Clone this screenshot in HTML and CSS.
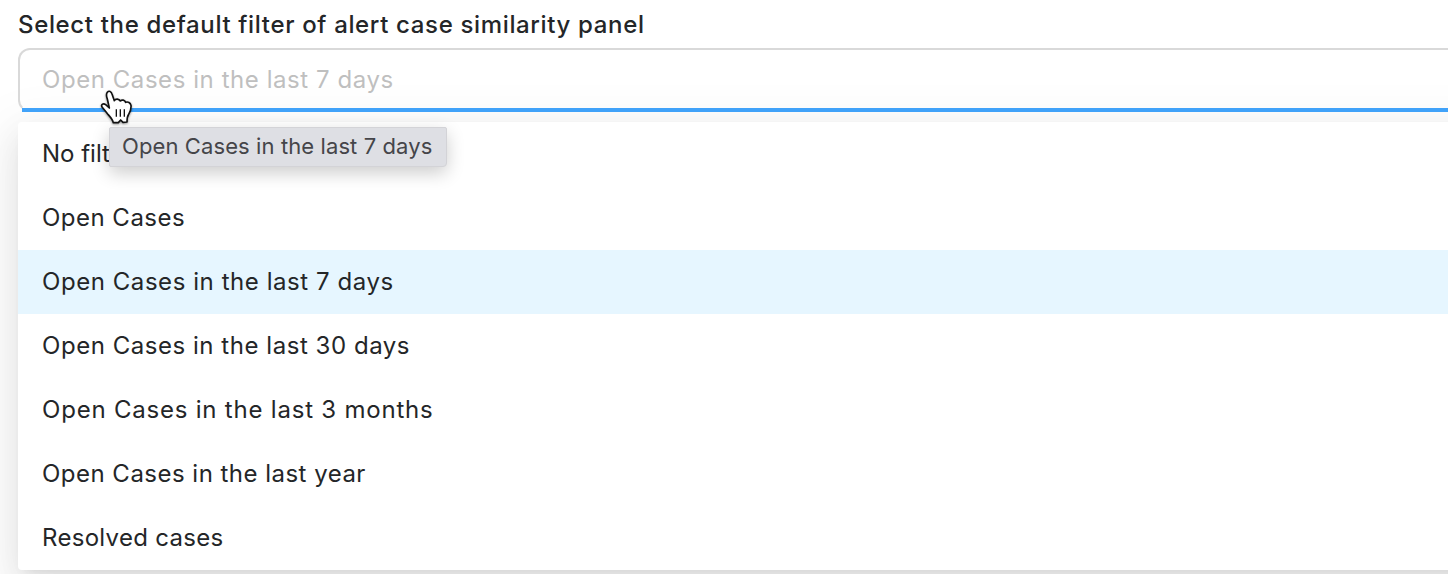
FILE: index.html
```html
<!DOCTYPE html>
<html lang="en">
<head>
<meta charset="utf-8">
<title>Default filter</title>
<link rel="stylesheet" href="styles.css">
</head>
<body>
<main class="field">
  <label class="label">Select the default filter of alert case similarity panel</label>
  <div class="select"><span class="t7">Open Cases in the last 7 days</span></div>
  <div class="menu">
    <div class="option"><span class="none">No filter</span></div>
    <div class="option"><span class="open">Open Cases</span></div>
    <div class="option selected"><span class="t7">Open Cases in the last 7 days</span></div>
    <div class="option"><span class="t30">Open Cases in the last 30 days</span></div>
    <div class="option"><span class="t3">Open Cases in the last 3 months</span></div>
    <div class="option"><span class="year">Open Cases in the last year</span></div>
    <div class="option"><span class="resolved">Resolved cases</span></div>
  </div>
</main>
<div class="tooltip">Open Cases in the last 7 days</div>
<svg class="cursor" viewBox="0 0 180 180">
  <path d="M52 37C57 31 64 34 66 42L73 62C77 55 87 56 91 63C96 58 104 60 107 67C114 64 121 68 123 76C124 86 121 95 116 103C111 110 111 117 111 126L99 127L92 120L85 128L70 128C67 117 59 109 53 102C47 94 42 88 36 81C32 73 40 69 47 74L58 84L52 57C49 49 48 42 52 37Z" fill="#fff" stroke="#111" stroke-width="5" stroke-linejoin="round"/>
  <path d="M79 88V110M91 88V110M103 88V110" fill="none" stroke="#111" stroke-width="4"/>
</svg>
</body>
</html>
```
FILE: styles.css
```css
* { box-sizing: border-box; }
body {
  margin: 0;
  height: 574px;
  overflow: hidden;
  position: relative;
  background: #fff;
  color: #242628;
  font: 400 24px/32px Inter, "Liberation Sans", sans-serif;
  white-space: nowrap;
}
.field {
  display: flex;
  flex-direction: column;
  width: 1600px;
  padding: 9px 0 0 18px;
}
.label {
  height: 39px;
  font-weight: 500;
  letter-spacing: .65px;
}
.select {
  position: relative;
  height: 64px;
  padding: 14px 22px;
  border: 2px solid #d9d9d9;
  border-bottom-color: transparent;
  border-radius: 12px;
  color: #bfbfbf;
}
.select::after {
  content: "";
  position: absolute;
  left: 2px;
  right: 2px;
  bottom: -2px;
  height: 4px;
  background: #40a2f9;
}
.t7 { letter-spacing: .56px; }
.t30 { letter-spacing: .54px; }
.t3 { letter-spacing: .79px; }
.year { letter-spacing: .48px; }
.open { letter-spacing: .48px; }
.resolved { letter-spacing: .3px; }
.menu {
  margin-top: 10px;
  height: 448px;
  border-radius: 4px;
  background: #fff;
  box-shadow: 0 6px 12px -8px rgba(0,0,0,.12), 0 12px 32px rgba(0,0,0,.08), 0 18px 56px 16px rgba(0,0,0,.05);
}
.option {
  height: 64px;
  padding: 16px 24px;
}
.selected { background: #e6f6ff; }
.tooltip {
  position: absolute;
  left: 109px;
  top: 127px;
  width: 338px;
  height: 40px;
  padding: 3px 12px;
  border: 1px solid #d3d3d7;
  border-radius: 2px 2px 4px 2px;
  background: #dedfe4;
  color: #454549;
  font-size: 22px;
  letter-spacing: .1px;
  line-height: 30px;
  box-shadow: 0 6px 18px rgba(0,0,0,.2);
}
.cursor {
  position: absolute;
  left: 90px;
  top: 80px;
  width: 60px;
  height: 60px;
  filter: drop-shadow(0 1px 1px rgba(0,0,0,.4));
}
```
